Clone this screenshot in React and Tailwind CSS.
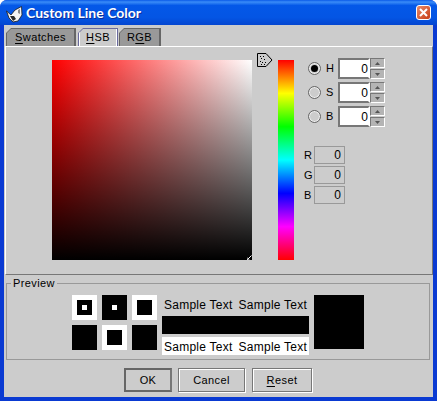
import React from 'react';

const Underlined = ({ before = '', letter, after = '' }) => (
  <span>
    {before}
    <span className="underline underline-offset-2">{letter}</span>
    {after}
  </span>
);

const Tab = ({ active, className, children }) => (
  <div
    className={`h-[18px] ${className} [clip-path:polygon(5px_0,100%_0,100%_100%,0_100%,0_5px)] ${
      active ? 'bg-[#6a6a9c]' : 'bg-[#666666]'
    } pt-px px-px ${active ? '' : 'pr-[2px]'}`}
  >
    <div
      className={`h-full flex items-center justify-center text-[11px] tracking-[0.4px] text-black [clip-path:polygon(4px_0,100%_0,100%_100%,0_100%,0_4px)] ${
        active ? 'bg-[#cccccc] border-x border-white' : 'bg-[#999999]'
      }`}
    >
      {children}
    </div>
  </div>
);

const Spinner = () => (
  <div className="flex flex-col gap-px w-[15px] h-[21px]">
    {[0, 1].map((i) => (
      <div
        key={i}
        className="flex-1 bg-[#b4b4b4] border border-t-[#777777] border-l-[#777777] border-r-white border-b-white flex items-center justify-center"
      >
        <svg width="5" height="3" viewBox="0 0 5 3">
          <path d={i === 0 ? 'M2.5 0L5 3H0Z' : 'M0 0H5L2.5 3Z'} fill="#555555" />
        </svg>
      </div>
    ))}
  </div>
);

const HsbRow = ({ label, checked }) => (
  <div className="flex items-center h-[21px]">
    <div className="w-[13px] h-[13px] rounded-full border border-[#666666] bg-[#cccccc] shadow-[inset_0_0_0_1px_#eeeeee] flex items-center justify-center">
      {checked && <div className="w-[7px] h-[7px] rounded-full bg-black" />}
    </div>
    <div className="w-[12px] ml-[5px] text-[11px] tracking-[0.3px] text-black">{label}</div>
    <div className="w-[32px] h-[21px] bg-white border-2 border-[#777777] border-r-white border-b-[#777777] flex items-center justify-end text-[12px] text-black">
      0
    </div>
    <Spinner />
  </div>
);

const RgbRow = ({ label }) => (
  <div className="flex items-center h-[18px]">
    <div className="w-[10px] text-[11px] text-black">{label}</div>
    <div className="w-[31px] h-[18px] border border-[#999999] flex items-center justify-end pr-[3px] text-[12px] text-black">
      0
    </div>
  </div>
);

const Swatch = ({ outer, middle, dot }) => (
  <div className={`w-[25px] h-[25px] flex items-center justify-center ${outer}`}>
    <div className={`w-[15px] h-[15px] flex items-center justify-center ${middle}`}>
      {dot && <div className="w-[5px] h-[5px] bg-white" />}
    </div>
  </div>
);

const SampleRow = ({ white }) => (
  <div className={`h-[18px] pt-px flex items-center gap-[6px] pl-[2px] whitespace-nowrap text-[12px] tracking-[0.25px] text-black ${white ? 'bg-white' : ''}`}>
    <span>Sample Text</span>
    <span>Sample Text</span>
  </div>
);

const DialogButton = ({ focused, className, children }) => (
  <button
    className={`h-[24px] ${className} text-[11px] tracking-[0.4px] text-black bg-[#cccccc] ${
      focused
        ? 'border-2 border-[#666666] border-r-[#777777]'
        : 'border border-[#777777] shadow-[1px_1px_0_#ffffff,inset_1px_1px_0_#ffffff]'
    }`}
  >
    {children}
  </button>
);

export default function App() {
  return (
    <div className="w-[437px] h-[401px] bg-white font-['Liberation_Sans',sans-serif]">
      <div className="w-full h-full rounded-t-[7px] overflow-hidden flex flex-col bg-[#0a3ad2]">
        {/* Title bar */}
        <div className="h-[25px] flex items-center pl-[6px] pr-[6px] bg-[linear-gradient(to_bottom,#0a5ae8,#3a8cf8_8%,#0458e8_22%,#0455e4_70%,#0446d0)]">
          <svg width="17" height="17" viewBox="0 0 17 17" className="mt-[3px]">
            <path d="M0.5 5L5 9L9 4L15.5 0.5L16 9L12 15L7 16L3 12Z" fill="#f4f4f4" stroke="#1a1a1a" strokeWidth="0.8" />
            <path d="M4 10L8 10L10 13L7 15Z" fill="#2a2a2a" />
            <path d="M12 4L14 3L14 8L12 7Z" fill="#8a8a8a" />
          </svg>
          <div className="ml-[3px] text-[14px] leading-none text-white font-['Lato',sans-serif] font-bold [text-shadow:1px_1px_0_#0a2f9c]">
            Custom Line Color
          </div>
          <div className="ml-auto w-[15px] h-[15px] rounded-[3px] border border-white bg-[linear-gradient(135deg,#e88a6a,#c83c14)] flex items-center justify-center">
            <svg width="9" height="9" viewBox="0 0 9 9">
              <path d="M1 1L8 8M8 1L1 8" stroke="white" strokeWidth="2" />
            </svg>
          </div>
        </div>

        {/* Dialog body */}
        <div className="flex-1 mx-[4px] mb-[4px] bg-[#cccccc] flex flex-col">
          <div className="flex items-end h-[21px] pl-[2px]">
            <Tab className="w-[70px]">
              <Underlined letter="S" after="watches" />
            </Tab>
            <Tab active className="w-[40px] ml-[2px]">
              <Underlined letter="H" after="SB" />
            </Tab>
            <Tab className="w-[42px] ml-px">
              <span>
                R<span className="underline underline-offset-2">G</span>B
              </span>
            </Tab>
          </div>

          <div className="h-[229px] ml-px flex border-t border-t-white border-l border-l-white border-r border-r-[#777777] border-b border-b-[#777777] pl-[46px] pt-[13px]">
            <div className="relative w-[200px] h-[200px] bg-[linear-gradient(to_bottom,transparent,#000),linear-gradient(to_right,#ff0000,#ffffff)]">
              <svg className="absolute right-0 bottom-0" width="5" height="5" viewBox="0 0 5 5">
                <path d="M4.5 0.5L0.5 4.5M0 2.5V5H2.5" stroke="#ffffff" fill="none" />
              </svg>
            </div>

            <div className="relative ml-[26px] w-[16px] h-[200px] bg-[linear-gradient(to_bottom,#ff0000,#ffff00,#00ff00,#00ffff,#0000ff,#ff00ff,#ff0000)]">
              <svg className="absolute -left-[22px] -top-[8px]" width="17" height="16" viewBox="0 0 17 16">
                <path d="M1.5 1.5H10L16 8L10 14.5H1.5Z" fill="#cccccc" stroke="#000000" />
                <path d="M4 4h1v1H4zM7 4h1v1H7zM5 6h1v1H5zM8 7h1v1H8zM4 9h1v1H4zM6 10h1v1H6zM9 10h1v1H9zM5 12h1v1H5zM8 12h1v1H8z" fill="#000000" />
              </svg>
            </div>

            <div className="ml-[10px] flex flex-col">
              <div className="flex flex-col gap-[3px] ml-[4px] -mt-[2px]">
                <HsbRow label="H" checked />
                <HsbRow label="S" />
                <HsbRow label="B" />
              </div>
              <div className="flex flex-col gap-[2px] mt-[19px]">
                <RgbRow label="R" />
                <RgbRow label="G" />
                <RgbRow label="B" />
              </div>
            </div>
          </div>

          {/* Preview */}
          <div className="relative ml-[2px] mr-[3px] mt-[8px] h-[77px] border border-[#999999] flex pl-[65px] pt-[11px]">
            <div className="absolute left-[4px] -top-[8px] px-[2px] bg-[#cccccc] text-[11px] leading-[15px] tracking-[0.4px] text-black">
              Preview
            </div>
            <div className="grid grid-cols-[25px_25px_25px] grid-rows-[25px_25px] gap-[5px]">
              <div className="w-[25px] h-[25px] bg-white flex items-center justify-center">
                <div className="w-[15px] h-[15px] bg-black flex items-center justify-center">
                  <div className="w-[5px] h-[5px] bg-white" />
                </div>
              </div>
              <Swatch outer="bg-black" middle="bg-black" dot />
              <Swatch outer="bg-white" middle="bg-black" />
              <Swatch outer="bg-black" middle="bg-black" />
              <Swatch outer="bg-white" middle="bg-black" />
              <Swatch outer="bg-black" middle="bg-black" />
            </div>
            <div className="ml-[5px] w-[147px] flex flex-col">
              <SampleRow />
              <div className="h-[18px] mt-[3px] bg-black" />
              <div className="mt-[3px]">
                <SampleRow white />
              </div>
            </div>
            <div className="ml-[5px] w-[50px] h-[54px] bg-black" />
          </div>

          {/* Buttons */}
          <div className="flex mt-[8px] pl-[120px]">
            <DialogButton focused className="w-[48px]">OK</DialogButton>
            <DialogButton className="w-[67px] ml-[6px]">Cancel</DialogButton>
            <DialogButton className="w-[60px] ml-[7px]">
              <Underlined letter="R" after="eset" />
            </DialogButton>
          </div>
        </div>
      </div>
    </div>
  );
}
